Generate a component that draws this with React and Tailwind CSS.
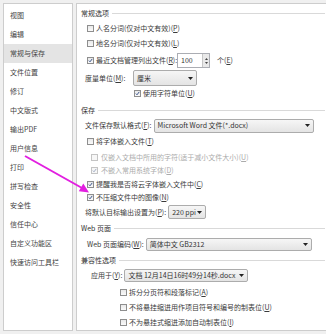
import React from 'react';

const font = { fontFamily: '"Noto Sans CJK SC", "Noto Sans", sans-serif' };

const navItems = [
  '视图',
  '编辑',
  '常规与保存',
  '文件位置',
  '修订',
  '中文版式',
  '输出PDF',
  '用户信息',
  '打印',
  '拼写检查',
  '安全性',
  '信任中心',
  '自定义功能区',
  '快速访问工具栏',
];

const Check = ({ checked, disabled }) => (
  <span
    className={`w-[7px] h-[7px] shrink-0 border flex items-center justify-center ${
      disabled ? 'border-[#c4c4c4] bg-[#f7f7f7]' : 'border-[#8e8e8e] bg-gradient-to-b from-[#e9e9e9] to-[#fafafa]'
    }`}
  >
    {checked && (
      <svg width="7" height="7" viewBox="0 0 7 7">
        <path
          d="M1.2 3.6 L2.8 5.3 L5.9 1.3"
          fill="none"
          stroke={disabled ? '#9aa7c0' : '#2f4b86'}
          strokeWidth="1.3"
        />
      </svg>
    )}
  </span>
);

const Arrow = () => (
  <svg width="5" height="3" viewBox="0 0 5 3" className="shrink-0">
    <path d="M0 0 H5 L2.5 3 Z" fill="#222" />
  </svg>
);

const Select = ({ className, children }) => (
  <div
    className={`shrink-0 flex items-center justify-between pl-[3px] pr-[3px] border border-[#acacac] rounded-[2px] bg-gradient-to-b from-[#f6f6f6] to-[#e4e4e4] text-[#333] whitespace-nowrap ${className}`}
  >
    <span className="leading-[9px]">{children}</span>
    <Arrow />
  </div>
);

const Section = ({ title, className }) => (
  <div className={`flex items-center gap-[3px] pl-[4px] pr-[1px] text-[#333] ${className}`}>
    <span className="whitespace-nowrap">{title}</span>
    <span className="flex-1 h-px bg-[#d9d9d9]" />
  </div>
);

const CheckRow = ({ label, checked, disabled, className, gap = 'gap-[2px]' }) => (
  <div className={`flex items-center ${gap} ${className}`}>
    <Check checked={checked} disabled={disabled} />
    <span className={`whitespace-nowrap ${disabled ? 'text-[#ababab]' : 'text-[#3a3a3a]'}`}>{label}</span>
  </div>
);

const App = () => {
  return (
    <div
      className="relative w-[326px] h-[334px] bg-[#f0f0f0] flex pt-[3px] pl-[3px] gap-[3px] overflow-hidden text-[7px] leading-[9px]"
      style={font}
    >
      {/* left nav */}
      <div className="w-[70px] h-[328px] shrink-0 bg-white border border-[#cdcdcd] pt-[2px]">
        {navItems.map((item) => (
          <div
            key={item}
            className={`h-[19px] flex items-center pl-[6px] text-[#444] whitespace-nowrap ${
              item === '常规与保存' ? 'bg-[#e4e4e4]' : ''
            }`}
          >
            {item}
          </div>
        ))}
      </div>

      {/* settings panel */}
      <div className="flex-1 h-[328px] bg-white border border-r-0 border-[#cdcdcd] pt-[3px] flex flex-col">
        <Section title="常规选项" className="h-[13px]" />
        <CheckRow label={<>人名分词(仅对中文有效)(<u>P</u>)</>} className="h-[16px] pl-[10px]" />
        <CheckRow label={<>地名分词(仅对中文有效)(<u>L</u>)</>} className="h-[14px] pl-[10px]" />
        <div className="h-[21px] flex items-center pl-[10px]">
          <Check checked />
          <span className="ml-[2px] w-[81px] whitespace-nowrap text-[#3a3a3a]">
            最近文档管理列出文件(<u>R</u>):
          </span>
          <div className="w-[33px] h-[15px] border border-[#abadb3] bg-white flex items-center">
            <span className="flex-1 pl-[3px] text-[#333]">100</span>
            <div className="w-[7px] h-[13px] bg-[#e9e9e9] border-l border-[#c6c6c6] flex flex-col items-center justify-center gap-[2px]">
              <svg width="3" height="2" viewBox="0 0 3 2">
                <path d="M0 2 L1.5 0 L3 2 Z" fill="#444" />
              </svg>
              <svg width="3" height="2" viewBox="0 0 3 2">
                <path d="M0 0 H3 L1.5 2 Z" fill="#444" />
              </svg>
            </div>
          </div>
          <span className="ml-[7px] text-[#3a3a3a]">
            个(<u>E</u>)
          </span>
        </div>
        <div className="h-[14px] flex items-center pl-[8px]">
          <span className="w-[48px] shrink-0 whitespace-nowrap text-[#3a3a3a]">
            度量单位(<u>M</u>):
          </span>
          <Select className="w-[64px] h-[16px]">厘米</Select>
        </div>
        <CheckRow label={<>使用字符单位(<u>U</u>)</>} checked className="h-[17px] pl-[57px]" />

        <Section title="保存" className="h-[16px]" />
        <div className="h-[15px] flex items-center gap-[2px] pl-[8px]">
          <span className="shrink-0 whitespace-nowrap text-[#3a3a3a]">
            文件保存默认格式(<u>F</u>):
          </span>
          <Select className="w-[160px] h-[14px]">Microsoft Word 文件(*.docx)</Select>
        </div>
        <CheckRow label={<>将字体嵌入文件(<u>T</u>)</>} className="h-[17px] pl-[10px]" />
        <CheckRow
          label={<>仅嵌入文档中所用的字符(适于减小文件大小)(<u>U</u>)</>}
          disabled
          gap="gap-[3px]"
          className="h-[14px] pl-[14px]"
        />
        <CheckRow
          label={<>不嵌入常用系统字体(<u>D</u>)</>}
          checked
          disabled
          gap="gap-[3px]"
          className="h-[13px] pl-[14px]"
        />
        <CheckRow label={<>提醒我是否将云字体嵌入文件中(<u>C</u>)</>} checked className="h-[14px] pl-[10px]" />
        <CheckRow label={<>不压缩文件中的图像(<u>N</u>)</>} checked className="h-[13px] pl-[10px]" />
        <div className="h-[16px] flex items-center gap-[2px] pl-[8px]">
          <span className="shrink-0 whitespace-nowrap text-[#3a3a3a]">
            将默认目标输出设置为(<u>P</u>):
          </span>
          <Select className="w-[38px] h-[14px]">220 ppi</Select>
        </div>

        <Section title="Web 页面" className="h-[16px]" />
        <div className="h-[16px] flex items-center gap-[2px] pl-[10px]">
          <span className="shrink-0 whitespace-nowrap text-[#3a3a3a]">
            Web 页面编码(<u>W</u>):
          </span>
          <Select className="w-[166px] h-[13px]">简体中文 GB2312</Select>
        </div>

        <Section title="兼容性选项" className="h-[16px]" />
        <div className="h-[15px] flex items-center gap-[2px] pl-[14px]">
          <span className="shrink-0 whitespace-nowrap text-[#3a3a3a]">
            应用于(<u>Y</u>):
          </span>
          <Select className="w-[124px] h-[13px]">文档 12月14日16时49分14秒.docx</Select>
        </div>
        <CheckRow label={<>拆分分页符和段落标记(<u>A</u>)</>} className="h-[18px] pl-[43px]" />
        <CheckRow
          label={<>不将悬挂缩进用作项目符号和编号的制表位(<u>U</u>)</>}
          className="h-[13px] pl-[43px]"
        />
        <CheckRow label={<>不为悬挂式缩进添加自动制表位(<u>I</u>)</>} className="h-[16px] pl-[43px]" />
      </div>

      {/* annotation arrow */}
      <svg className="absolute left-0 top-0 pointer-events-none" width="326" height="334" viewBox="0 0 326 334">
        <line x1="25" y1="156" x2="82" y2="188" stroke="#e21fe0" strokeWidth="2" />
        <path d="M89 192.5 L78.8 191.3 L83.3 183.5 Z" fill="#e21fe0" />
      </svg>
    </div>
  );
};

export default App;
